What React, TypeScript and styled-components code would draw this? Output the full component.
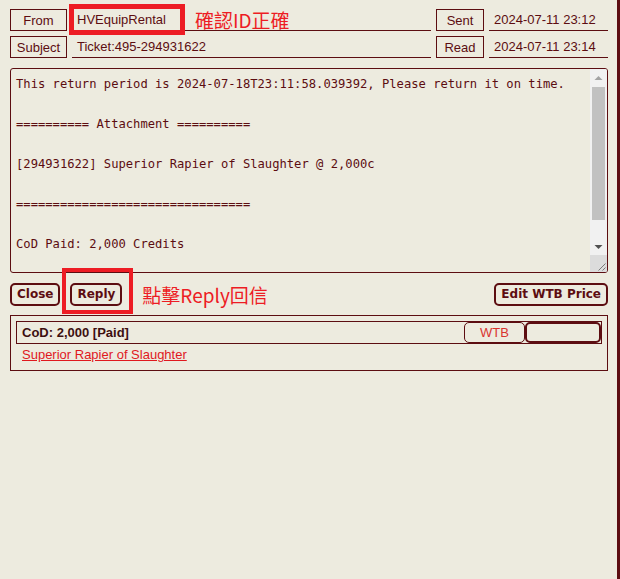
import React from "react";
import styled, { createGlobalStyle } from "styled-components";

const ink = "#5C0D11";
const bg = "#EDEBDF";
const mark = "#ED1C24";

const GlobalStyle = createGlobalStyle`
  html, body { margin: 0; padding: 0; background: ${bg}; }
  body { font-family: "Liberation Sans", Arial, sans-serif; }
`;

const Window = styled.div`
  box-sizing: border-box;
  width: 620px;
  min-height: 579px;
  border-right: 3px solid ${ink};
  padding: 9px 9px 0 10px;
  background: ${bg};
`;

const Header = styled.div`
  display: grid;
  grid-template-columns: 57px 359px 48px 119px;
  grid-auto-rows: 22px;
  column-gap: 5px;
  row-gap: 5px;
`;

const Label = styled.div`
  box-sizing: border-box;
  border: 1px solid ${ink};
  display: flex;
  align-items: center;
  justify-content: center;
  font-size: 13px;
  color: ${ink};
`;

const Field = styled.div`
  position: relative;
  box-sizing: border-box;
  border-bottom: 1px solid ${ink};
  padding-left: 5px;
  display: flex;
  align-items: center;
  font-size: 13px;
  color: ${ink};
  white-space: nowrap;
`;

const MarkBox = styled.div<{ $left: number; $top: number; $width: number; $height: number; $thick: number }>`
  position: absolute;
  box-sizing: border-box;
  left: ${(p) => p.$left}px;
  top: ${(p) => p.$top}px;
  width: ${(p) => p.$width}px;
  height: ${(p) => p.$height}px;
  border: ${(p) => p.$thick}px solid ${mark};
  pointer-events: none;
`;

const Note = styled.span<{ $gap: number }>`
  margin-left: ${(p) => p.$gap}px;
  font-family: "Noto Sans CJK TC", "Noto Sans CJK SC", sans-serif;
  font-size: 19px;
  line-height: 22px;
  color: ${mark};
  white-space: nowrap;
`;

const MessageBox = styled.div`
  margin-top: 10px;
  height: 205px;
  box-sizing: border-box;
  border: 1px solid ${ink};
  border-radius: 3px;
  display: flex;
  overflow: hidden;
`;

const MessageText = styled.div`
  flex: 1;
  padding: 5px;
  font-family: "DejaVu Sans Mono", monospace;
  font-size: 12.16px;
  line-height: 20px;
  white-space: pre;
  color: ${ink};
  overflow: hidden;
`;

const ScrollBar = styled.div`
  width: 17px;
  display: flex;
  flex-direction: column;
  background: #f1f1f1;
`;

const ScrollButton = styled.div`
  height: 17px;
  display: flex;
  align-items: center;
  justify-content: center;
`;

const Track = styled.div`
  flex: 1;
  padding: 1px 2px 0;
`;

const Thumb = styled.div`
  height: 133px;
  background: #c1c1c1;
`;

const Corner = styled.div`
  height: 17px;
  background: #dcdcdc;
  display: flex;
  align-items: flex-end;
  justify-content: flex-end;
`;

const Toolbar = styled.div`
  margin-top: 10px;
  display: flex;
  align-items: center;
  gap: 10px;
`;

const Button = styled.button<{ $push?: boolean }>`
  box-sizing: border-box;
  height: 23px;
  padding: 0 5px;
  margin: 0;
  margin-left: ${(p) => (p.$push ? "auto" : "0")};
  border: 2px solid ${ink};
  border-radius: 5px;
  background: ${bg};
  color: ${ink};
  font-family: "DejaVu Sans", Verdana, sans-serif;
  font-weight: bold;
  font-size: 12px;
  line-height: 19px;
  cursor: pointer;
`;

const Marked = styled.span`
  position: relative;
  display: inline-flex;
`;

const Attachments = styled.div`
  margin-top: 9px;
  border: 1px solid ${ink};
  padding: 5px 5px 7px;
`;

const ItemRow = styled.div`
  box-sizing: border-box;
  height: 23px;
  border: 1px solid ${ink};
  padding-left: 5px;
  display: flex;
  align-items: stretch;
`;

const CodText = styled.span`
  align-self: center;
  font-weight: bold;
  font-size: 13px;
  color: #3d1010;
`;

const PillButton = styled.button<{ $width: number; $thick: number; $push?: boolean }>`
  box-sizing: border-box;
  width: ${(p) => p.$width}px;
  margin: 0;
  margin-left: ${(p) => (p.$push ? "auto" : "0")};
  padding: 0;
  border: ${(p) => p.$thick}px solid ${ink};
  border-radius: 5px;
  background: ${bg};
  color: #d9342f;
  font-family: "Liberation Sans", Arial, sans-serif;
  font-size: 13px;
`;

const ItemLink = styled.a`
  display: block;
  margin-top: 3px;
  padding-left: 6px;
  font-size: 13px;
  line-height: 16px;
  color: #e0181e;
  text-decoration: underline;
`;

const message = `This return period is 2024-07-18T23:11:58.039392, Please return it on time.

========== Attachment ==========

[294931622] Superior Rapier of Slaughter @ 2,000c

================================

CoD Paid: 2,000 Credits

`;

const Arrow = ({ up, color }: { up?: boolean; color: string }) => (
  <svg width="9" height="6" viewBox="0 0 9 6">
    <polygon points={up ? "0.5,5 4.5,1 8.5,5" : "0.5,1 4.5,5 8.5,1"} fill={color} />
  </svg>
);

export default function App() {
  return (
    <>
      <GlobalStyle />
      <Window>
        <Header>
          <Label>From</Label>
          <Field>
            HVEquipRental
            <Note $gap={29}>確認ID正確</Note>
            <MarkBox $left={-3} $top={-5} $width={116} $height={31} $thick={5} />
          </Field>
          <Label>Sent</Label>
          <Field>2024-07-11 23:12</Field>
          <Label>Subject</Label>
          <Field>Ticket:495-294931622</Field>
          <Label>Read</Label>
          <Field>2024-07-11 23:14</Field>
        </Header>

        <MessageBox>
          <MessageText>{message}</MessageText>
          <ScrollBar>
            <ScrollButton>
              <Arrow up color="#a3a3a3" />
            </ScrollButton>
            <Track>
              <Thumb />
            </Track>
            <ScrollButton>
              <Arrow color="#505050" />
            </ScrollButton>
            <Corner>
              <svg width="17" height="17" viewBox="0 0 17 17">
                <path d="M15.5 8.5 L8.5 15.5 M15.5 12.5 L12.5 15.5" stroke="#7a7a7a" strokeWidth="1" fill="none" />
              </svg>
            </Corner>
          </ScrollBar>
        </MessageBox>

        <Toolbar>
          <Button>Close</Button>
          <Marked>
            <Button>Reply</Button>
            <MarkBox $left={-8} $top={-15} $width={71} $height={46} $thick={4} />
          </Marked>
          <Note $gap={10}>點擊Reply回信</Note>
          <Button $push>Edit WTB Price</Button>
        </Toolbar>

        <Attachments>
          <ItemRow>
            <CodText>CoD: 2,000 [Paid]</CodText>
            <PillButton $push $width={61} $thick={1}>WTB</PillButton>
            <PillButton $width={76} $thick={2} />
          </ItemRow>
          <ItemLink href="#">Superior Rapier of Slaughter</ItemLink>
        </Attachments>
      </Window>
    </>
  );
}
